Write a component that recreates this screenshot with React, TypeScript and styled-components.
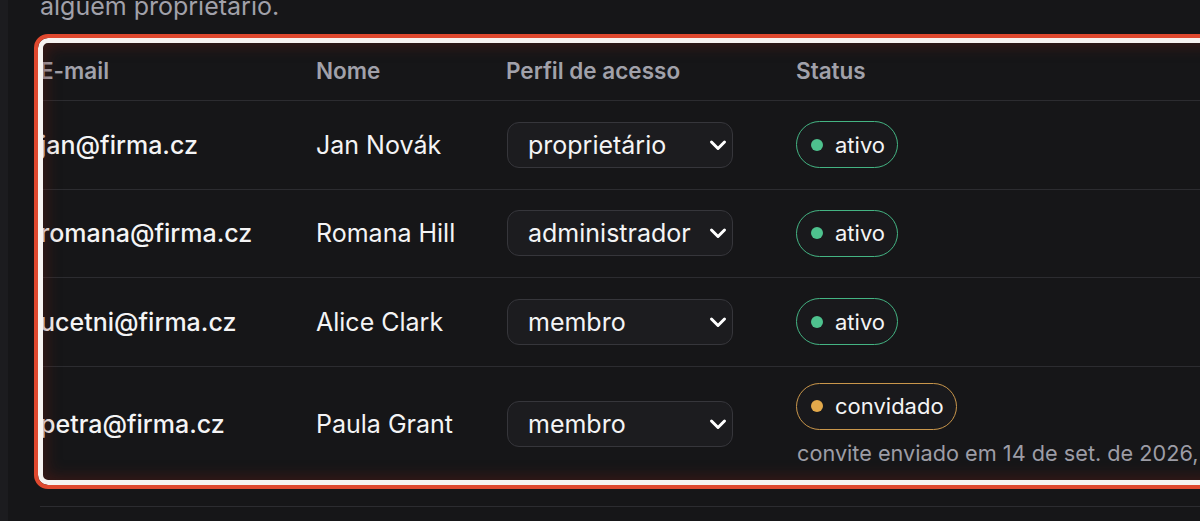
import React from "react";
import styled, { createGlobalStyle } from "styled-components";

const Global = createGlobalStyle`
  html, body { margin: 0; padding: 0; background: #161618; }
  body { font-family: Inter, "Noto Sans", "Liberation Sans", sans-serif; color: #f4f4f5; overflow: hidden; }
  * { box-sizing: border-box; }
`;

const Page = styled.div`
  display: flex;
  width: 1200px;
  height: 521px;
  overflow: hidden;
`;

const EdgeStrip = styled.div`
  width: 8px;
  flex: none;
  background: #1c1c1f;
`;

const Main = styled.main`
  flex: 1;
  padding-left: 32px;
  min-width: 0;
`;

const Intro = styled.p`
  margin: -10px 0 0;
  font-size: 25px;
  line-height: 33px;
  color: #a1a1aa;
`;

const TableWrap = styled.div`
  position: relative;
  margin-top: 17px;
  margin-right: -40px;
  &::after {
    content: "";
    position: absolute;
    left: -6px;
    top: -6px;
    bottom: -7px;
    right: -10px;
    border: 4px solid #e0492f;
    border-radius: 14px;
    box-shadow: inset 0 0 0 5px #f7f3f1, inset 0 0 16px 7px rgba(110, 28, 20, 0.45);
    pointer-events: none;
  }
`;

const Row = styled.div<{ $head?: boolean; $tall?: boolean; $last?: boolean }>`
  display: grid;
  grid-template-columns: 276px 190px 290px 1fr;
  align-items: center;
  height: ${(p) => (p.$head ? "61px" : p.$tall ? "115.5px" : "88.5px")};
  border-bottom: ${(p) => (p.$last ? "none" : "1px solid #2c2c30")};
`;

const HeadCell = styled.div`
  font-size: 22.5px;
  font-weight: 600;
  color: #a1a1aa;
`;

const EmailCell = styled.div`
  font-size: 25px;
  font-weight: 500;
  color: #f4f4f5;
`;

const NameCell = styled.div`
  font-size: 25px;
  color: #f4f4f5;
`;

const SelectBox = styled.div`
  position: relative;
  margin-left: 1px;
  width: 226px;
  height: 46px;
  border: 1px solid #36363b;
  border-radius: 12px;
  background: #1c1c1f;
  display: flex;
  align-items: center;
  padding-left: 20px;
  font-size: 25px;
  color: #f4f4f5;
`;

const Chevron = styled.svg`
  position: absolute;
  right: 2px;
  top: 50%;
  transform: translateY(-50%);
`;

const StatusCell = styled.div`
  display: flex;
  flex-direction: column;
  align-items: flex-start;
  gap: 10px;
`;

const Badge = styled.span<{ $tone: "green" | "amber" }>`
  display: inline-flex;
  align-items: center;
  gap: 12px;
  height: 47px;
  padding: 0 12px 0 14px;
  border-radius: 24px;
  border: 1.5px solid ${(p) => (p.$tone === "green" ? "#44b483" : "#c9964b")};
  background: #19191c;
  font-size: 22px;
  color: #f4f4f5;
`;

const Dot = styled.span<{ $tone: "green" | "amber" }>`
  width: 12px;
  height: 12px;
  border-radius: 50%;
  background: ${(p) => (p.$tone === "green" ? "#4ec28e" : "#e3a94b")};
`;

const SubText = styled.div`
  font-size: 21.7px;
  color: #9d9da6;
  white-space: nowrap;
  padding-left: 1px;
`;

const Divider = styled.div`
  margin-top: 24px;
  height: 1px;
  background: #2c2c30;
`;

type Member = {
  email: string;
  name: string;
  role: string;
  status: "ativo" | "convidado";
  note?: string;
};

const members: Member[] = [
  { email: "jan@firma.cz", name: "Jan Novák", role: "proprietário", status: "ativo" },
  { email: "romana@firma.cz", name: "Romana Hill", role: "administrador", status: "ativo" },
  { email: "ucetni@firma.cz", name: "Alice Clark", role: "membro", status: "ativo" },
  {
    email: "petra@firma.cz",
    name: "Paula Grant",
    role: "membro",
    status: "convidado",
    note: "convite enviado em 14 de set. de 2026, 10:32",
  },
];

export default function App() {
  return (
    <>
      <Global />
      <Page>
        <EdgeStrip />
        <Main>
          <Intro>alguém proprietário.</Intro>
          <TableWrap>
            <Row $head>
              <HeadCell>E-mail</HeadCell>
              <HeadCell>Nome</HeadCell>
              <HeadCell>Perfil de acesso</HeadCell>
              <HeadCell>Status</HeadCell>
            </Row>
            {members.map((m, i) => {
              const last = i === members.length - 1;
              const tone = m.status === "ativo" ? "green" : "amber";
              return (
                <Row key={m.email} $tall={!!m.note} $last={last}>
                  <EmailCell>{m.email}</EmailCell>
                  <NameCell>{m.name}</NameCell>
                  <div>
                    <SelectBox>
                      {m.role}
                      <Chevron width="24" height="24" viewBox="0 0 24 24" fill="none">
                        <polyline
                          points="5.5,9 12,15.5 18.5,9"
                          stroke="#ffffff"
                          strokeWidth="3"
                          strokeLinecap="round"
                          strokeLinejoin="round"
                        />
                      </Chevron>
                    </SelectBox>
                  </div>
                  <StatusCell>
                    <Badge $tone={tone}>
                      <Dot $tone={tone} />
                      {m.status}
                    </Badge>
                    {m.note && <SubText>{m.note}</SubText>}
                  </StatusCell>
                </Row>
              );
            })}
          </TableWrap>
          <Divider />
        </Main>
      </Page>
    </>
  );
}
